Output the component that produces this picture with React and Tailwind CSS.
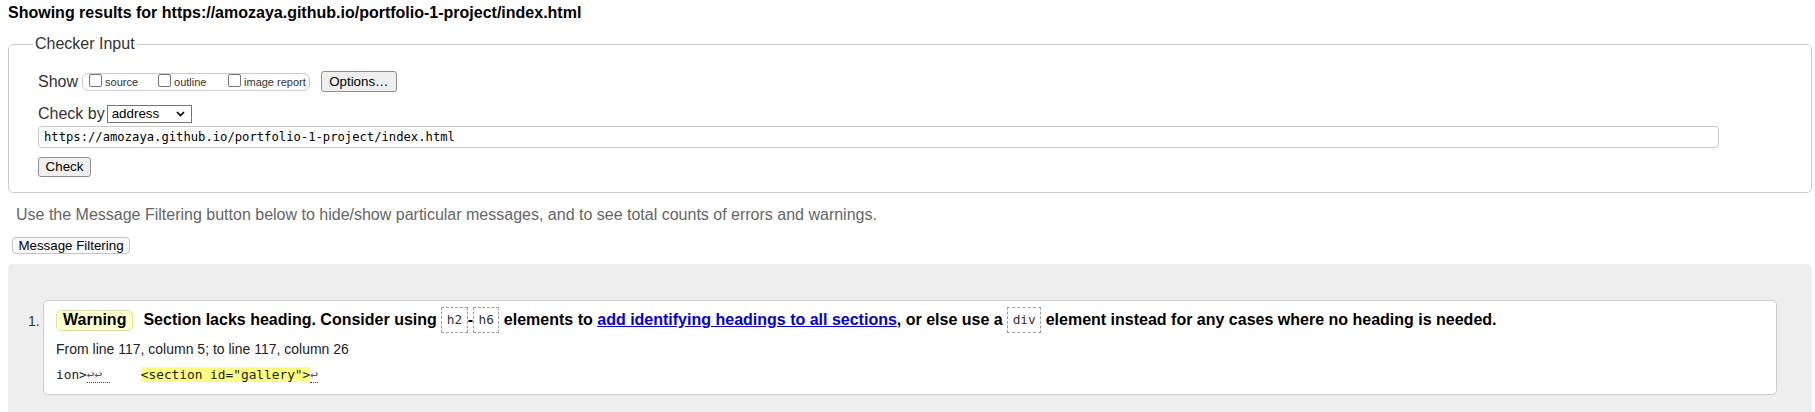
import React from "react";

const sans = "font-['Liberation_Sans',Arial,sans-serif]";
const mono = "font-['DejaVu_Sans_Mono','Liberation_Mono',monospace]";

function Box() {
  return <span className="inline-block w-[13px] h-[13px] shrink-0 border border-[#767676] rounded-[2px] bg-white ml-[4px] mr-[3px]" />;
}

function Code({ children }) {
  return (
    <span className={`inline-block align-middle h-[26px] leading-[24px] px-[4.5px] border border-dashed border-[#a0a0a0] ${mono} text-[12.8px] font-normal text-[#333]`}>
      {children}
    </span>
  );
}

export default function App() {
  return (
    <div className={`h-[412px] overflow-hidden bg-white ${sans} text-[#222]`}>
      <div className="ml-[8px] pt-[4px] text-[16px] leading-[18px] font-bold text-black">
        Showing results for https://amozaya.github.io/portfolio-1-project/index.html
      </div>

      <fieldset className="ml-[8px] mr-[3px] mt-[13px] border border-[#cccccc] rounded-[5px] pb-[15px]">
        <legend className="ml-[24px] px-[2px] text-[16px] leading-[18px] text-[#333]">Checker Input</legend>
        <div className="pl-[29px] pt-[18px]">
          <div className="flex items-center h-[21px]">
            <span className="text-[16px] leading-[18px] text-[#333]">Show</span>
            <span className="ml-[4px] flex items-start h-[18px] border border-[#cccccc] rounded-[6px] pl-[2px] pr-[3px]">
              <span className="flex items-start w-[69px]">
                <Box />
                <span className="mt-[2px] text-[11px] leading-[13px] text-[#333]">source</span>
              </span>
              <span className="flex items-start w-[70px]">
                <Box />
                <span className="mt-[2px] text-[11px] leading-[13px] text-[#333]">outline</span>
              </span>
              <span className="flex items-start">
                <Box />
                <span className="mt-[2px] text-[11px] leading-[13px] text-[#333]">image report</span>
              </span>
            </span>
            <span className="ml-[11px] w-[76px] h-[21px] flex items-center justify-center border border-[#8f8f8f] rounded-[3px] bg-[#efefef] text-[13.33px] text-black">
              Options…
            </span>
          </div>

          <div className="flex items-center h-[18px] mt-[13px]">
            <span className="text-[16px] leading-[18px] text-[#333]">Check by</span>
            <span className="ml-[2px] w-[85px] h-[18px] flex items-center justify-between border border-[#767676] bg-white pl-[4px] pr-[6px] text-[13.33px] text-black">
              <span>address</span>
              <svg width="9" height="6" viewBox="0 0 9 6" fill="none">
                <path d="M1 1l3.5 3.5L8 1" stroke="#000" strokeWidth="1.6" />
              </svg>
            </span>
          </div>

          <div className={`mt-[3px] w-[1681px] h-[22px] flex items-center border border-[#c8c8c8] rounded-[4px] pl-[5px] ${mono} text-[12.2px] text-black`}>
            https://amozaya.github.io/portfolio-1-project/index.html
          </div>

          <div className="mt-[9px] w-[53px] h-[20px] flex items-center justify-center border border-[#8f8f8f] rounded-[3px] bg-[#efefef] text-[13.33px] text-black">
            Check
          </div>
        </div>
      </fieldset>

      <div className="ml-[16px] mt-[13px] text-[16px] leading-[18px] text-[#666]">
        Use the Message Filtering button below to hide/show particular messages, and to see total counts of errors and warnings.
      </div>

      <div className="ml-[12px] mt-[13px] w-[118px] h-[17px] flex items-center justify-center border border-[#c4c4c4] rounded-[4px] bg-[#fbfbfb] text-[13.33px] text-black">
        Message Filtering
      </div>

      <div className="ml-[8px] mr-[3px] mt-[10px] bg-[#eeeeee] rounded-t-[5px] pt-[36px] pb-[35px] pl-[20px] pr-[35px] flex">
        <div className="w-[15px] shrink-0 pt-[13px] text-[14px] leading-[16px] text-[#333]">1.</div>
        <div className="flex-1 bg-white border border-[#cccccc] rounded-[5px] pl-[12px] pt-[6px] pb-[11px]">
          <div className="flex items-center h-[26px]">
            <span className="h-[21px] flex items-center px-[6px] border border-[#e0dfa8] rounded-[5px] bg-[#ffffcc] text-[16px] font-bold text-black">
              Warning
            </span>
            <span className="ml-[10px] text-[16px] leading-[26px] font-bold text-black whitespace-nowrap">
              Section lacks heading. Consider using <Code>h2</Code>-<Code>h6</Code> elements to{" "}
              <a className="text-[#0000dd] underline">add identifying headings to all sections</a>, or else use a{" "}
              <Code>div</Code> element instead for any cases where no heading is needed.
            </span>
          </div>
          <div className="mt-[8px] text-[14px] leading-[16px] text-[#222]">
            From line 117, column 5; to line 117, column 26
          </div>
          <div className={`mt-[10px] ${mono} text-[12.8px] leading-[16px] text-[#222] whitespace-pre`}>
            ion&gt;<span className="border-b border-dotted border-[#444] text-[#555]">↩↩ </span>{"    "}
            <span className="bg-[#ffff80]">&lt;section id="gallery"&gt;</span>
            <span className="border-b border-dotted border-[#444] text-[#555]">↩</span>
          </div>
        </div>
      </div>
    </div>
  );
}
